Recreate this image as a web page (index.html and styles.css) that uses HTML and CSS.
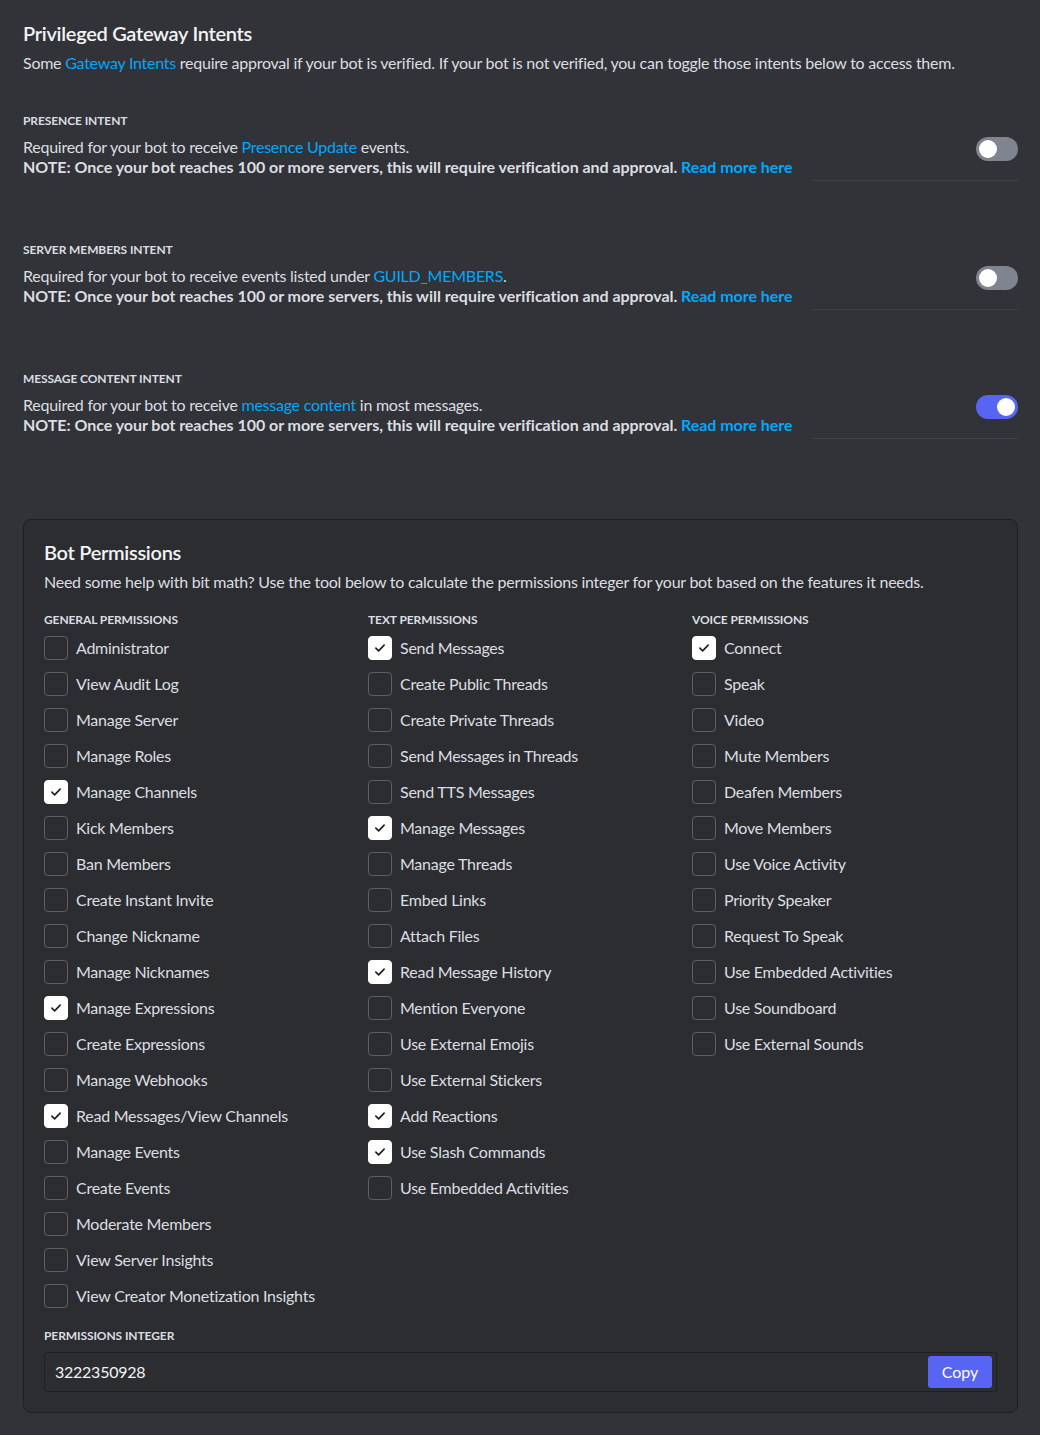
FILE: index.html
```html
<!DOCTYPE html>
<html lang="en">
<head>
<meta charset="utf-8">
<title>Bot settings</title>
<link rel="stylesheet" href="styles.css">
</head>
<body>
<main class="page">
  <section class="intents">
    <h2 class="title">Privileged Gateway Intents</h2>
    <p class="desc">Some <a class="link">Gateway Intents</a> require approval if your bot is verified. If your bot is not verified, you can toggle those intents below to access them.</p>

    <div class="intent">
      <div class="label">Presence Intent</div>
      <div class="intent-row">
        <div class="intent-text">
          <div>Required for your bot to receive <a class="link">Presence Update</a> events.</div>
          <div class="note">NOTE: Once your bot reaches 100 or more servers, this will require verification and approval. <a class="link">Read more here</a></div>
        </div>
        <div class="intent-side"><span class="toggle"><span class="knob"></span></span></div>
      </div>
    </div>

    <div class="intent">
      <div class="label">Server Members Intent</div>
      <div class="intent-row">
        <div class="intent-text">
          <div>Required for your bot to receive events listed under <a class="link">GUILD_MEMBERS</a>.</div>
          <div class="note">NOTE: Once your bot reaches 100 or more servers, this will require verification and approval. <a class="link">Read more here</a></div>
        </div>
        <div class="intent-side"><span class="toggle"><span class="knob"></span></span></div>
      </div>
    </div>

    <div class="intent">
      <div class="label">Message Content Intent</div>
      <div class="intent-row">
        <div class="intent-text">
          <div>Required for your bot to receive <a class="link">message content</a> in most messages.</div>
          <div class="note">NOTE: Once your bot reaches 100 or more servers, this will require verification and approval. <a class="link">Read more here</a></div>
        </div>
        <div class="intent-side"><span class="toggle on"><span class="knob"></span></span></div>
      </div>
    </div>
  </section>

  <section class="panel">
    <h2 class="title">Bot Permissions</h2>
    <p class="desc">Need some help with bit math? Use the tool below to calculate the permissions integer for your bot based on the features it needs.</p>

    <div class="cols">
      <div class="col">
        <div class="label">General Permissions</div>
        <ul class="checks">
          <li><span class="box"></span>Administrator</li>
          <li><span class="box"></span>View Audit Log</li>
          <li><span class="box"></span>Manage Server</li>
          <li><span class="box"></span>Manage Roles</li>
          <li><span class="box checked"><svg viewBox="0 0 24 24"><path d="M7.5 12.2l3 3 6-6.4"/></svg></span>Manage Channels</li>
          <li><span class="box"></span>Kick Members</li>
          <li><span class="box"></span>Ban Members</li>
          <li><span class="box"></span>Create Instant Invite</li>
          <li><span class="box"></span>Change Nickname</li>
          <li><span class="box"></span>Manage Nicknames</li>
          <li><span class="box checked"><svg viewBox="0 0 24 24"><path d="M7.5 12.2l3 3 6-6.4"/></svg></span>Manage Expressions</li>
          <li><span class="box"></span>Create Expressions</li>
          <li><span class="box"></span>Manage Webhooks</li>
          <li><span class="box checked"><svg viewBox="0 0 24 24"><path d="M7.5 12.2l3 3 6-6.4"/></svg></span>Read Messages/View Channels</li>
          <li><span class="box"></span>Manage Events</li>
          <li><span class="box"></span>Create Events</li>
          <li><span class="box"></span>Moderate Members</li>
          <li><span class="box"></span>View Server Insights</li>
          <li><span class="box"></span>View Creator Monetization Insights</li>
        </ul>
      </div>
      <div class="col">
        <div class="label">Text Permissions</div>
        <ul class="checks">
          <li><span class="box checked"><svg viewBox="0 0 24 24"><path d="M7.5 12.2l3 3 6-6.4"/></svg></span>Send Messages</li>
          <li><span class="box"></span>Create Public Threads</li>
          <li><span class="box"></span>Create Private Threads</li>
          <li><span class="box"></span>Send Messages in Threads</li>
          <li><span class="box"></span>Send TTS Messages</li>
          <li><span class="box checked"><svg viewBox="0 0 24 24"><path d="M7.5 12.2l3 3 6-6.4"/></svg></span>Manage Messages</li>
          <li><span class="box"></span>Manage Threads</li>
          <li><span class="box"></span>Embed Links</li>
          <li><span class="box"></span>Attach Files</li>
          <li><span class="box checked"><svg viewBox="0 0 24 24"><path d="M7.5 12.2l3 3 6-6.4"/></svg></span>Read Message History</li>
          <li><span class="box"></span>Mention Everyone</li>
          <li><span class="box"></span>Use External Emojis</li>
          <li><span class="box"></span>Use External Stickers</li>
          <li><span class="box checked"><svg viewBox="0 0 24 24"><path d="M7.5 12.2l3 3 6-6.4"/></svg></span>Add Reactions</li>
          <li><span class="box checked"><svg viewBox="0 0 24 24"><path d="M7.5 12.2l3 3 6-6.4"/></svg></span>Use Slash Commands</li>
          <li><span class="box"></span>Use Embedded Activities</li>
        </ul>
      </div>
      <div class="col">
        <div class="label">Voice Permissions</div>
        <ul class="checks">
          <li><span class="box checked"><svg viewBox="0 0 24 24"><path d="M7.5 12.2l3 3 6-6.4"/></svg></span>Connect</li>
          <li><span class="box"></span>Speak</li>
          <li><span class="box"></span>Video</li>
          <li><span class="box"></span>Mute Members</li>
          <li><span class="box"></span>Deafen Members</li>
          <li><span class="box"></span>Move Members</li>
          <li><span class="box"></span>Use Voice Activity</li>
          <li><span class="box"></span>Priority Speaker</li>
          <li><span class="box"></span>Request To Speak</li>
          <li><span class="box"></span>Use Embedded Activities</li>
          <li><span class="box"></span>Use Soundboard</li>
          <li><span class="box"></span>Use External Sounds</li>
        </ul>
      </div>
    </div>

    <div class="label int-label">Permissions Integer</div>
    <div class="int-field">
      <span class="int-value">3222350928</span>
      <button class="copy" type="button">Copy</button>
    </div>
  </section>
</main>
</body>
</html>
```

FILE: styles.css
```css
* { box-sizing: border-box; }

html, body {
  margin: 0;
  padding: 0;
  background: #313338;
}

body {
  font-family: Lato, "Noto Sans", "Liberation Sans", sans-serif;
  font-size: 16px;
  line-height: 20px;
  color: #dbdee1;
  letter-spacing: -0.25px;
}

.page {
  padding: 21px 22px 22px 23px;
}

.title {
  margin: 0;
  font-size: 20px;
  line-height: 24px;
  font-weight: 600;
  color: #f2f3f5;
  letter-spacing: -0.3px;
}

.desc {
  margin: 8px 0 0;
}

.link {
  color: #00a8fc;
  text-decoration: none;
  cursor: pointer;
}

.label {
  font-size: 12px;
  line-height: 16px;
  font-weight: 700;
  text-transform: uppercase;
  color: #dbdee1;
  letter-spacing: -0.1px;
}

.intent {
  margin-top: 40px;
}

.intent + .intent {
  margin-top: 61px;
}

.intent-row {
  display: flex;
  margin-top: 8px;
}

.intent-text {
  flex: 1;
  padding-bottom: 4px;
}

.note {
  font-weight: 700;
  letter-spacing: -0.04px;
}

.note .link {
  font-weight: 700;
}

.intent-side {
  width: 206px;
  display: flex;
  justify-content: flex-end;
  align-items: flex-start;
  border-bottom: 1px solid #3f4147;
}

.toggle {
  position: relative;
  display: block;
  width: 42px;
  height: 24px;
  border-radius: 12px;
  background: #80848e;
}

.toggle .knob {
  position: absolute;
  top: 3px;
  left: 3px;
  width: 18px;
  height: 18px;
  border-radius: 50%;
  background: #fff;
}

.toggle.on {
  background: #5865f2;
}

.toggle.on .knob {
  left: auto;
  right: 3px;
}

.panel {
  margin-top: 80px;
  background: #2b2d31;
  border: 1px solid #1e1f22;
  border-radius: 8px;
  padding: 20px 20px 20px 20px;
}

.cols {
  display: grid;
  grid-template-columns: 324px 324px 1fr;
  margin-top: 20px;
}

.checks {
  list-style: none;
  margin: 8px 0 0;
  padding: 0;
  display: flex;
  flex-direction: column;
  gap: 12px;
}

.checks li {
  display: flex;
  align-items: center;
  gap: 8px;
  height: 24px;
  color: #dbdee1;
}

.box {
  flex: none;
  width: 24px;
  height: 24px;
  border: 1px solid #5c5f66;
  border-radius: 4px;
  display: flex;
  align-items: center;
  justify-content: center;
}

.box.checked {
  background: #fff;
  border-color: #fff;
}

.box svg {
  width: 24px;
  height: 24px;
  fill: none;
  stroke: #1e1f22;
  stroke-width: 1.8;
  stroke-linecap: round;
  stroke-linejoin: round;
}

.int-label {
  margin-top: 20px;
}

.int-field {
  margin-top: 8px;
  height: 40px;
  background: #2b2d31;
  border: 1px solid #1e1f22;
  border-radius: 3px;
  display: flex;
  align-items: center;
  justify-content: space-between;
  padding: 0 4px 0 10px;
}

.int-value {
  color: #f2f3f5;
}

.copy {
  height: 32px;
  width: 64px;
  border: none;
  border-radius: 3px;
  background: #5865f2;
  color: #fff;
  font-family: inherit;
  font-size: 16px;
  line-height: 20px;
  padding: 0;
  letter-spacing: 0;
}
```
